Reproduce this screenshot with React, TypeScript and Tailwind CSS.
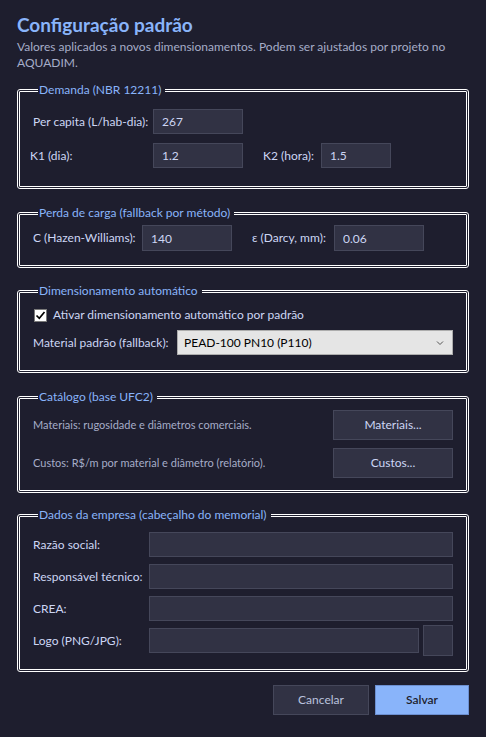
import React from 'react'

const inputCls =
    'h-[25px] bg-[#313244] border border-[#45475a] text-[#cdd6f4] text-[12px] px-[8px] outline-none'

function Group({ title, className, children }: { title: string; className?: string; children: React.ReactNode }) {
    return (
        <fieldset className={`border-[3px] border-double border-white rounded-[3px] ${className ?? ''}`}>
            <legend className="ml-[5px] pl-[1px] pr-[4px] text-[12px] leading-4 text-[#89b4fa]">{title}</legend>
            {children}
        </fieldset>
    )
}

function Field({ value, className }: { value?: string; className?: string }) {
    return <input readOnly value={value ?? ''} className={`${inputCls} ${className ?? ''}`} />
}

export default function App() {
    return (
        <div
            className="w-[486px] h-[737px] bg-[#1e1e2e] px-[17px] pt-[13px] text-[#cdd6f4] text-[12px] overflow-hidden whitespace-nowrap"
            style={{ fontFamily: 'Lato, "Noto Sans", sans-serif' }}
        >
            {/* header */}
            <h1 className="text-[19px] font-bold leading-[24px] text-[#89b4fa]">Configuração padrão</h1>
            <p className="mt-[2px] text-[12px] leading-[16px] text-[#a6adc8] w-[445px] whitespace-normal">
                Valores aplicados a novos dimensionamentos. Podem ser ajustados por projeto no AQUADIM.
            </p>

            {/* Demanda */}
            <Group title="Demanda (NBR 12211)" className="mt-[11px] px-[13px] pt-[11px] pb-[18px]">
                <div className="grid grid-cols-[120px_90px_20px_58px_70px] gap-y-[9px] items-center">
                    <span>Per capita (L/hab-dia):</span>
                    <Field value="267" />
                    <span className="col-span-3" />
                    <span className="-ml-[3px]">K1 (dia):</span>
                    <Field value="1.2" />
                    <span />
                    <span>K2 (hora):</span>
                    <Field value="1.5" />
                </div>
            </Group>

            {/* Perda de carga */}
            <Group title="Perda de carga (fallback por método)" className="mt-[16px] px-[13px] pt-[4px] pb-[14px]">
                <div className="flex items-center">
                    <span className="w-[109px]">C (Hazen-Williams):</span>
                    <Field value="140" className="w-[90px] h-[26px]" />
                    <span className="ml-[20px] w-[82px]">ε (Darcy, mm):</span>
                    <Field value="0.06" className="w-[90px] h-[26px]" />
                </div>
            </Group>

            {/* Dimensionamento automático */}
            <Group title="Dimensionamento automático" className="mt-[15px] px-[13px] pt-[9px] pb-[15px]">
                <div className="flex items-center gap-[6px] h-[14px] ml-[1px]">
                    <span className="w-[13px] h-[13px] bg-white border border-[#7a7a7a] flex items-center justify-center">
                        <svg width="11" height="11" viewBox="0 0 11 11">
                            <path d="M1.5 5.5 L4.3 8.3 L9.5 2" fill="none" stroke="#000" strokeWidth="1.7" />
                        </svg>
                    </span>
                    <span>Ativar dimensionamento automático por padrão</span>
                </div>
                <div className="flex items-center mt-[8px]">
                    <span className="w-[144px]">Material padrão (fallback):</span>
                    <div className="flex-1 h-[25px] bg-[#e5e5e5] border border-[#adadad] flex items-center justify-between pl-[6px] pr-[8px] text-black">
                        <span>PEAD-100 PN10 (P110)</span>
                        <svg width="8" height="6" viewBox="0 0 8 6">
                            <path d="M1 1.5 L4 4.5 L7 1.5" fill="none" stroke="#555" strokeWidth="1" />
                        </svg>
                    </div>
                </div>
            </Group>

            {/* Catálogo */}
            <Group title="Catálogo (base UFC2)" className="mt-[16px] px-[13px] pt-[5px] pb-[12px]">
                <div className="grid grid-cols-[1fr_120px] gap-y-[8px] items-center text-[11px] text-[#a6adc8]">
                    <span>Materiais: rugosidade e diâmetros comerciais.</span>
                    <button className="h-[30px] bg-[#313244] border border-[#45475a] text-[12px] text-[#cdd6f4]">
                        Materiais...
                    </button>
                    <span>Custos: R$/m por material e diâmetro (relatório).</span>
                    <button className="h-[30px] bg-[#313244] border border-[#45475a] text-[12px] text-[#cdd6f4]">
                        Custos...
                    </button>
                </div>
            </Group>

            {/* Dados da empresa */}
            <Group title="Dados da empresa (cabeçalho do memorial)" className="mt-[14px] px-[13px] pt-[9px] pb-[16px]">
                <div className="grid grid-cols-[116px_1fr] gap-y-[7px] items-center">
                    <span>Razão social:</span>
                    <Field className="w-full" />
                    <span>Responsável técnico:</span>
                    <Field className="w-full" />
                    <span>CREA:</span>
                    <Field className="w-full" />
                    <span>Logo (PNG/JPG):</span>
                    <div className="flex items-center gap-[4px] h-[25px]">
                        <Field className="flex-1 min-w-0" />
                        <button className="w-[30px] h-[31px] shrink-0 bg-[#313244] border border-[#45475a]" />
                    </div>
                </div>
            </Group>

            {/* footer */}
            <div className="flex justify-end gap-[6px] mt-[13px]">
                <button className="w-[96px] h-[30px] bg-[#313244] border border-[#45475a] text-[#bac2de] text-[12px]">
                    Cancelar
                </button>
                <button className="w-[94px] h-[30px] bg-[#89b4fa] border border-[#6c8fd0] text-[#1e1e2e] text-[12px] font-semibold">
                    Salvar
                </button>
            </div>
        </div>
    )
}
